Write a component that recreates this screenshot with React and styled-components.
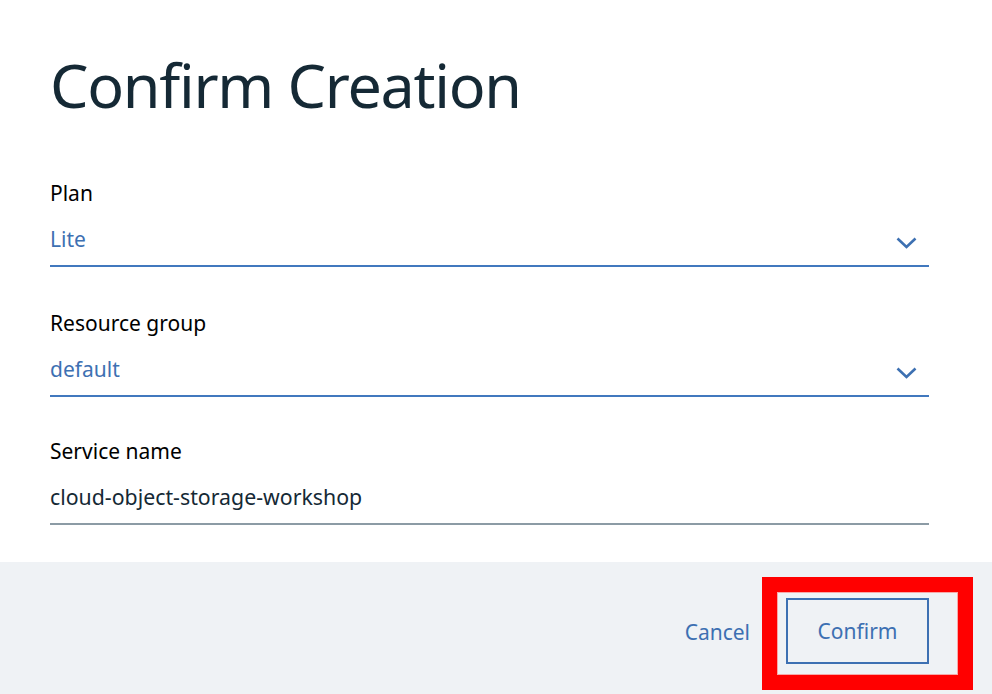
import styled, { createGlobalStyle } from 'styled-components';

const GlobalStyle = createGlobalStyle`
  html, body {
    margin: 0;
    padding: 0;
    background: #ffffff;
  }
  body {
    font-family: "Noto Sans", "Open Sans", sans-serif;
  }
`;

const Page = styled.div`
  width: 992px;
  height: 694px;
  display: flex;
  flex-direction: column;
  overflow: hidden;
`;

const Body = styled.div`
  padding: 0 63px 0 50px;
  flex: 1;
`;

const Title = styled.h1`
  margin: 0;
  padding-top: 47px;
  height: 133px;
  box-sizing: border-box;
  font-size: 61px;
  line-height: 76px;
  font-weight: 400;
  color: #152935;
  letter-spacing: -1.3px;
`;

const Field = styled.div`
  display: flex;
  flex-direction: column;
  gap: 7px;
  margin-top: ${p => p.first ? '46px' : p.last ? '40px' : '42px'};
`;

const Label = styled.label`
  font-size: 21px;
  line-height: 28px;
  color: #000000;
`;

const Select = styled.div`
  height: 53px;
  box-sizing: border-box;
  display: flex;
  align-items: center;
  justify-content: space-between;
  border-bottom: 2px solid #4178be;
  padding-bottom: 2px;
  font-size: 21px;
  color: #3d70b2;
`;

const Chevron = styled.svg`
  width: 21px;
  height: 12px;
  margin-right: 12px;
  margin-top: 8px;
`;

const Input = styled.div`
  height: 53px;
  box-sizing: border-box;
  display: flex;
  align-items: center;
  border-bottom: 2px solid #8c9ba5;
  padding-bottom: 2px;
  font-size: 21.3px;
  color: #152935;
`;

const Footer = styled.div`
  height: 132px;
  box-sizing: border-box;
  padding: 6px 63px 0 0;
  background: #eff2f5;
  display: flex;
  align-items: center;
  justify-content: flex-end;
  gap: 36px;
`;

const LinkButton = styled.span`
  font-size: 21px;
  color: #3d70b2;
  margin-top: 2px;
`;

const ButtonWrap = styled.div`
  position: relative;
`;

const PrimaryButton = styled.button`
  width: 143px;
  height: 66px;
  box-sizing: border-box;
  background: transparent;
  border: 2px solid #3d70b2;
  font-family: inherit;
  font-size: 21px;
  color: #3d70b2;
  cursor: pointer;
`;

const Highlight = styled.div`
  position: absolute;
  left: -24px;
  top: -21px;
  width: 211px;
  height: 113px;
  box-sizing: border-box;
  border: 15px solid #ff0000;
  box-shadow: inset 0 0 0 1px #f7a8a8;
  pointer-events: none;
`;

function ChevronDown() {
  return (
    <Chevron viewBox="0 0 21 12">
      <polyline points="1.5,1.5 10.5,10 19.5,1.5" fill="none" stroke="#3d70b2" strokeWidth="2.6" />
    </Chevron>
  );
}

function App() {
  return (
    <Page>
      <GlobalStyle />
      <Body>
        <Title>Confirm Creation</Title>
        <Field first>
          <Label>Plan</Label>
          <Select>
            Lite
            <ChevronDown />
          </Select>
        </Field>
        <Field>
          <Label>Resource group</Label>
          <Select>
            default
            <ChevronDown />
          </Select>
        </Field>
        <Field last>
          <Label>Service name</Label>
          <Input>cloud-object-storage-workshop</Input>
        </Field>
      </Body>
      <Footer>
        <LinkButton>Cancel</LinkButton>
        <ButtonWrap>
          <PrimaryButton>Confirm</PrimaryButton>
          <Highlight />
        </ButtonWrap>
      </Footer>
    </Page>
  );
}

export default App;
